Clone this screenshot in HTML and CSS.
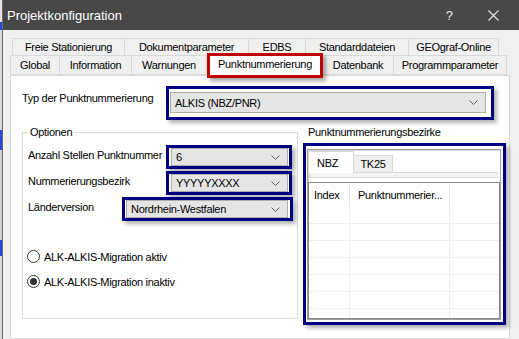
FILE: index.html
```html
<!DOCTYPE html>
<html lang="de">
<head>
    <meta charset="UTF-8">
    <title>Projektkonfiguration</title>
    <link rel="stylesheet" href="styles.css">
</head>
<body>

<div class="behind"></div>

<div class="window">
    <div class="titlebar">
        <span class="title">Projektkonfiguration</span>
        <span class="help">?</span>
        <svg class="close" width="11" height="11" viewBox="0 0 11 11"><path d="M0.5 0.5 L10.5 10.5 M10.5 0.5 L0.5 10.5" stroke="#e8e8e8" stroke-width="1.1" fill="none"/></svg>
    </div>

    <div class="tabs">
        <div class="tab-row back">
            <div class="tab w113">Freie Stationierung</div>
            <div class="tab w124">Dokumentparameter</div>
            <div class="tab w57">EDBS</div>
            <div class="tab w103">Standarddateien</div>
            <div class="tab w90">GEOgraf-Online</div>
        </div>
        <div class="tab-row front">
            <div class="tab w50">Global</div>
            <div class="tab w72">Information</div>
            <div class="tab w75">Warnungen</div>
            <div class="tab active">Punktnummerierung</div>
            <div class="tab w71">Datenbank</div>
            <div class="tab w113">Programmparameter</div>
        </div>
    </div>

    <div class="page">
        <div class="type-row">
            <label class="type-label">Typ der Punktnummerierung</label>
            <div class="mark mark-type">
                <div class="combo wide">ALKIS (NBZ/PNR)<svg width="9" height="5" viewBox="0 0 9 5"><path d="M0.5 0.5 L4.5 4.5 L8.5 0.5" stroke="#606060" fill="none"/></svg></div>
            </div>
        </div>

        <div class="columns">
            <fieldset class="options">
                <legend>Optionen</legend>

                <div class="opt-row">
                    <label class="opt-label">Anzahl Stellen Punktnummer</label>
                    <div class="mark mark-small">
                        <div class="combo small">6<svg width="9" height="5" viewBox="0 0 9 5"><path d="M0.5 0.5 L4.5 4.5 L8.5 0.5" stroke="#606060" fill="none"/></svg></div>
                    </div>
                </div>
                <div class="opt-row">
                    <label class="opt-label">Nummerierungsbezirk</label>
                    <div class="mark mark-small">
                        <div class="combo small">YYYYYXXXX<svg width="9" height="5" viewBox="0 0 9 5"><path d="M0.5 0.5 L4.5 4.5 L8.5 0.5" stroke="#606060" fill="none"/></svg></div>
                    </div>
                </div>
                <div class="opt-row">
                    <label class="opt-label short">Länderversion</label>
                    <div class="mark mark-land">
                        <div class="combo land">Nordrhein-Westfalen<svg width="9" height="5" viewBox="0 0 9 5"><path d="M0.5 0.5 L4.5 4.5 L8.5 0.5" stroke="#606060" fill="none"/></svg></div>
                    </div>
                </div>

                <div class="radios">
                    <div class="radio-row"><span class="radio"></span>ALK-ALKIS-Migration aktiv</div>
                    <div class="radio-row"><span class="radio checked"></span>ALK-ALKIS-Migration inaktiv</div>
                </div>
            </fieldset>

            <div class="districts">
                <div class="districts-label">Punktnummerierungsbezirke</div>
                <div class="mark mark-list">
                    <div class="frame">
                        <div class="mini-tabs">
                            <div class="mini-tab sel">NBZ</div>
                            <div class="mini-tab">TK25</div>
                        </div>
                        <div class="mini-page"></div>
                        <div class="listview">
                            <div class="lv-head">
                                <div class="lv-col c1">Index</div>
                                <div class="lv-col c2">Punktnummerier...</div>
                                <div class="lv-col c3"></div>
                            </div>
                            <div class="lv-row"><div class="lv-cell c1"></div><div class="lv-cell c2"></div><div class="lv-cell c3"></div></div>
                            <div class="lv-row"><div class="lv-cell c1"></div><div class="lv-cell c2"></div><div class="lv-cell c3"></div></div>
                            <div class="lv-row"><div class="lv-cell c1"></div><div class="lv-cell c2"></div><div class="lv-cell c3"></div></div>
                            <div class="lv-row"><div class="lv-cell c1"></div><div class="lv-cell c2"></div><div class="lv-cell c3"></div></div>
                            <div class="lv-row"><div class="lv-cell c1"></div><div class="lv-cell c2"></div><div class="lv-cell c3"></div></div>
                            <div class="lv-row"><div class="lv-cell c1"></div><div class="lv-cell c2"></div><div class="lv-cell c3"></div></div>
                            <div class="lv-row"><div class="lv-cell c1"></div><div class="lv-cell c2"></div><div class="lv-cell c3"></div></div>
                        </div>
                    </div>
                </div>
            </div>
        </div>
    </div>
</div>

</body>
</html>
```

FILE: styles.css
```css
body { margin: 0; height: 339px; overflow: hidden; display: flex; font-family: "Liberation Sans", Arial, sans-serif; font-size: 11px; letter-spacing: -0.3px; color: #000; background: #e8e8e8; }
.behind { width: 2px; background: linear-gradient(#e6e6e6 0 22px, #2448d8 22px 30px, #d8d8d8 30px 130px, #2448d8 130px 150px, #d0d0d0 150px 240px, #2448d8 240px 256px, #d8d8d8 256px); border-right: 1px solid #6a6a6a; }
.window { flex: 1; display: flex; flex-direction: column; background: #f0f0f0; min-width: 0; }

/* Titelleiste */
.titlebar { height: 30px; flex-shrink: 0; background: #484848; color: #fff; display: flex; align-items: center; padding-left: 4px; }
.title { font-size: 13px; letter-spacing: 0; flex: 1; }
.help { font-size: 13px; color: #e8e8e8; letter-spacing: 0; margin-right: 35px; }
.close { margin-right: 20px; }

/* Reiter */
.tabs { padding-top: 8px; flex-shrink: 0; }
.tab-row { display: flex; }
.tab-row.back { margin-left: 9px; height: 18px; }
.tab-row.front { margin-left: 7px; height: 20px; margin-top: -1px; }
.tab { box-sizing: border-box; border: 1px solid #d9d9d9; border-left: none; background: #f0f0f0; display: flex; align-items: center; justify-content: center; white-space: nowrap; }
.tab:first-child { border-left: 1px solid #d9d9d9; }
.tab.active { width: 116px; height: 25px; margin-top: -2px; margin-bottom: -3px; background: #fff; border: 3px solid #c00000; position: relative; z-index: 2; box-shadow: 3px 3px 4px rgba(0, 0, 0, 0.35); padding-bottom: 3px; }
.w50 { width: 50px; } .w57 { width: 57px; } .w71 { width: 71px; } .w72 { width: 72px; } .w75 { width: 75px; }
.w90 { width: 90px; } .w103 { width: 103px; } .w113 { width: 113px; } .w124 { width: 124px; }

/* Seite */
.page { flex: 1; margin: 0 9px 0 7px; background: #fff; border: 1px solid #d9d9d9; padding: 10px 0 0 11px; min-height: 0; }
label { line-height: 13px; }

.mark { box-sizing: border-box; border: 3px solid #000080; box-shadow: 3px 3px 4px rgba(0, 0, 0, 0.3); }
.combo { box-sizing: border-box; background: #e5e5e5; border: 1px solid #adadad; display: flex; align-items: center; justify-content: space-between; padding: 0 7px 0 4px; white-space: nowrap; }

.type-row { display: flex; align-items: flex-start; }
.type-label { width: 144px; padding-top: 6px; }
.mark-type { width: 328px; height: 34px; padding: 3px 5px 4px 1px; }
.combo.wide { width: 316px; height: 21px; }

.columns { display: flex; margin-top: 6px; align-items: flex-start; }
.options { box-sizing: border-box; width: 276px; height: 193px; margin: 0; min-width: 0; border: 1px solid #dcdcdc; padding: 6px 5px 0 5px; }
.options legend { padding: 0 2px; line-height: 13px; }

.opt-row { display: flex; align-items: flex-start; margin-top: 2px; }
.opt-row:first-of-type { margin-top: 0; }
.opt-label { width: 138px; flex-shrink: 0; padding-top: 4px; white-space: nowrap; }
.opt-label.short { width: 94px; }
.mark-small { width: 126px; height: 24px; padding: 0 1px 0 2px; }
.combo.small { width: 117px; height: 18px; }
.mark-land { width: 171px; height: 24px; padding: 0 2px 0 1px; }
.combo.land { width: 162px; height: 18px; }

.radios { margin-top: 23px; margin-left: -1px; }
.radio-row { height: 25px; display: flex; align-items: center; gap: 4px; }
.radio { box-sizing: border-box; width: 13px; height: 13px; border: 1px solid #333; border-radius: 50%; background: #fff; display: flex; align-items: center; justify-content: center; }
.radio.checked:before { content: ""; width: 7px; height: 7px; border-radius: 50%; background: #333; }

/* Bezirke */
.districts { margin-left: 5px; width: 203px; }
.districts-label { padding-left: 5px; line-height: 13px; }
.mark-list { margin-top: 4px; height: 182px; padding: 3px 2px 2px 1px; }
.frame { height: 100%; box-sizing: border-box; border: 1px solid #a0a0a0; box-shadow: inset 1px 1px 0 #d4d4d4; background: #fff; display: flex; flex-direction: column; }
.mini-tabs { height: 22px; display: flex; align-items: flex-end; flex-shrink: 0; }
.mini-tab { box-sizing: border-box; height: 17px; width: 39px; background: #f0f0f0; border: 1px solid #d9d9d9; border-left: none; border-bottom: none; display: flex; align-items: center; justify-content: center; }
.mini-tab.sel { height: 22px; width: 46px; background: #fff; border-left: 1px solid #d9d9d9; justify-content: flex-start; padding-left: 8px; position: relative; z-index: 1; margin-bottom: -1px; }
.mini-page { height: 6px; box-sizing: border-box; margin: 0 2px 0 1px; border: 1px solid #d9d9d9; background: #f4f4f4; flex-shrink: 0; }
.listview { margin-top: 4px; flex: 1; border: 1px solid #828790; overflow: hidden; }
.lv-head { height: 24px; display: flex; }
.lv-col { box-sizing: border-box; display: flex; align-items: center; border-right: 1px solid #e5e5e5; white-space: nowrap; }
.c1 { width: 41px; padding-left: 5px; }
.c2 { width: 100px; padding-left: 8px; }
.c3 { flex: 1; border-right: none; }
.lv-row { display: flex; height: 17px; box-sizing: border-box; border-bottom: 1px solid #efefef; }
.lv-cell { box-sizing: border-box; border-right: 1px solid #efefef; }
.lv-cell.c3 { border-right: none; }
```
